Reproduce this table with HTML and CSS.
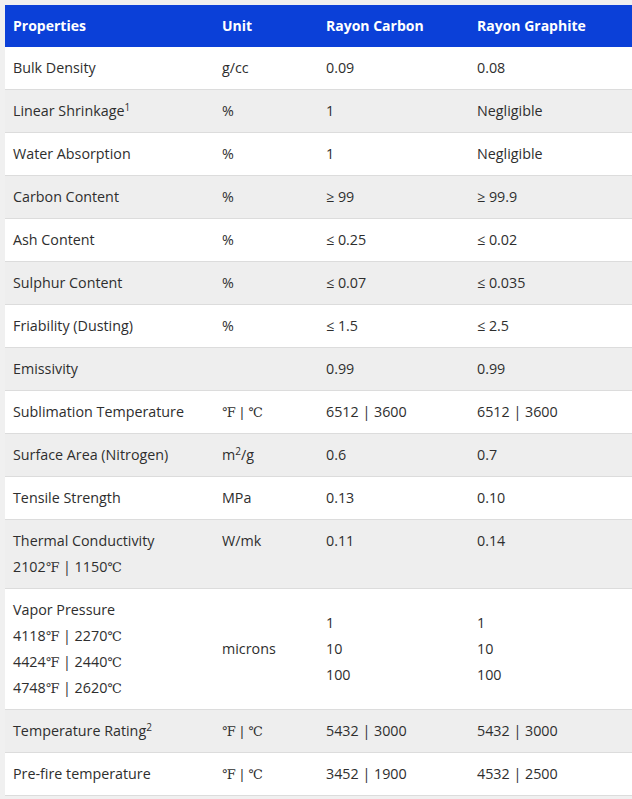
FILE: index.html
```html
<!DOCTYPE html>
<html>
<head>
<meta charset="utf-8">
<link rel="stylesheet" href="styles.css">
</head>
<body>
<table class="props">
  <colgroup>
    <col class="c1"><col class="c2"><col class="c3"><col class="c4">
  </colgroup>
  <thead>
    <tr><th>Properties</th><th>Unit</th><th>Rayon Carbon</th><th>Rayon Graphite</th></tr>
  </thead>
  <tbody>
    <tr><td>Bulk Density</td><td>g/cc</td><td>0.09</td><td>0.08</td></tr>
    <tr><td>Linear Shrinkage<sup>1</sup></td><td>%</td><td>1</td><td>Negligible</td></tr>
    <tr><td>Water Absorption</td><td>%</td><td>1</td><td>Negligible</td></tr>
    <tr><td>Carbon Content</td><td>%</td><td>≥ 99</td><td>≥ 99.9</td></tr>
    <tr><td>Ash Content</td><td>%</td><td>≤ 0.25</td><td>≤ 0.02</td></tr>
    <tr><td>Sulphur Content</td><td>%</td><td>≤ 0.07</td><td>≤ 0.035</td></tr>
    <tr><td>Friability (Dusting)</td><td>%</td><td>≤ 1.5</td><td>≤ 2.5</td></tr>
    <tr><td>Emissivity</td><td></td><td>0.99</td><td>0.99</td></tr>
    <tr><td>Sublimation Temperature</td><td><span class="deg">℉ | ℃</span></td><td>6512 | 3600</td><td>6512 | 3600</td></tr>
    <tr><td>Surface Area (Nitrogen)</td><td>m<sup>2</sup>/g</td><td>0.6</td><td>0.7</td></tr>
    <tr><td>Tensile Strength</td><td>MPa</td><td>0.13</td><td>0.10</td></tr>
    <tr class="top"><td>Thermal Conductivity<br>2102<span class="deg">℉</span> | 1150<span class="deg">℃</span></td><td>W/mk</td><td>0.11</td><td>0.14</td></tr>
    <tr><td>Vapor Pressure<br>4118<span class="deg">℉</span> | 2270<span class="deg">℃</span><br>4424<span class="deg">℉</span> | 2440<span class="deg">℃</span><br>4748<span class="deg">℉</span> | 2620<span class="deg">℃</span></td><td>microns</td><td>1<br>10<br>100</td><td>1<br>10<br>100</td></tr>
    <tr><td>Temperature Rating<sup>2</sup></td><td><span class="deg">℉ | ℃</span></td><td>5432 | 3000</td><td>5432 | 3000</td></tr>
    <tr><td>Pre-fire temperature</td><td><span class="deg">℉ | ℃</span></td><td>3452 | 1900</td><td>4532 | 2500</td></tr>
  </tbody>
</table>
</body>
</html>
```

FILE: styles.css
```css
html, body {
  margin: 0;
  padding: 0;
  background: #f0f0f0;
  overflow: hidden;
}
body {
  padding: 5px 0 0 5px;
  font-family: "Open Sans", "Noto Sans", sans-serif;
  font-size: 14.3px;
  color: #2e2e2e;
}
.props {
  border-collapse: collapse;
  width: 627px;
  table-layout: fixed;
}
.c1 { width: 209px; }
.c2 { width: 104px; }
.c3 { width: 151px; }
.c4 { width: 163px; }
.props th {
  background: #0b40d8;
  color: #fff;
  font-weight: 700;
  font-size: 14px;
  text-align: left;
  padding: 8px 8px;
  line-height: 26px;
}
.props td {
  padding: 8px 8px;
  height: 26px;
  line-height: 26px;
  vertical-align: middle;
  border-bottom: 1px solid #dcdcdc;
  background: #fff;
  box-sizing: content-box;
}
.props tbody tr:nth-child(even) td {
  background: #eeeeee;
}
.props tr.top td {
  vertical-align: top;
}
.props sup {
  font-size: 10px;
  line-height: 0;
  vertical-align: 5px;
}
.deg {
  font-family: "DejaVu Serif", serif;
  font-size: 13px;
  line-height: 0;
}
```
